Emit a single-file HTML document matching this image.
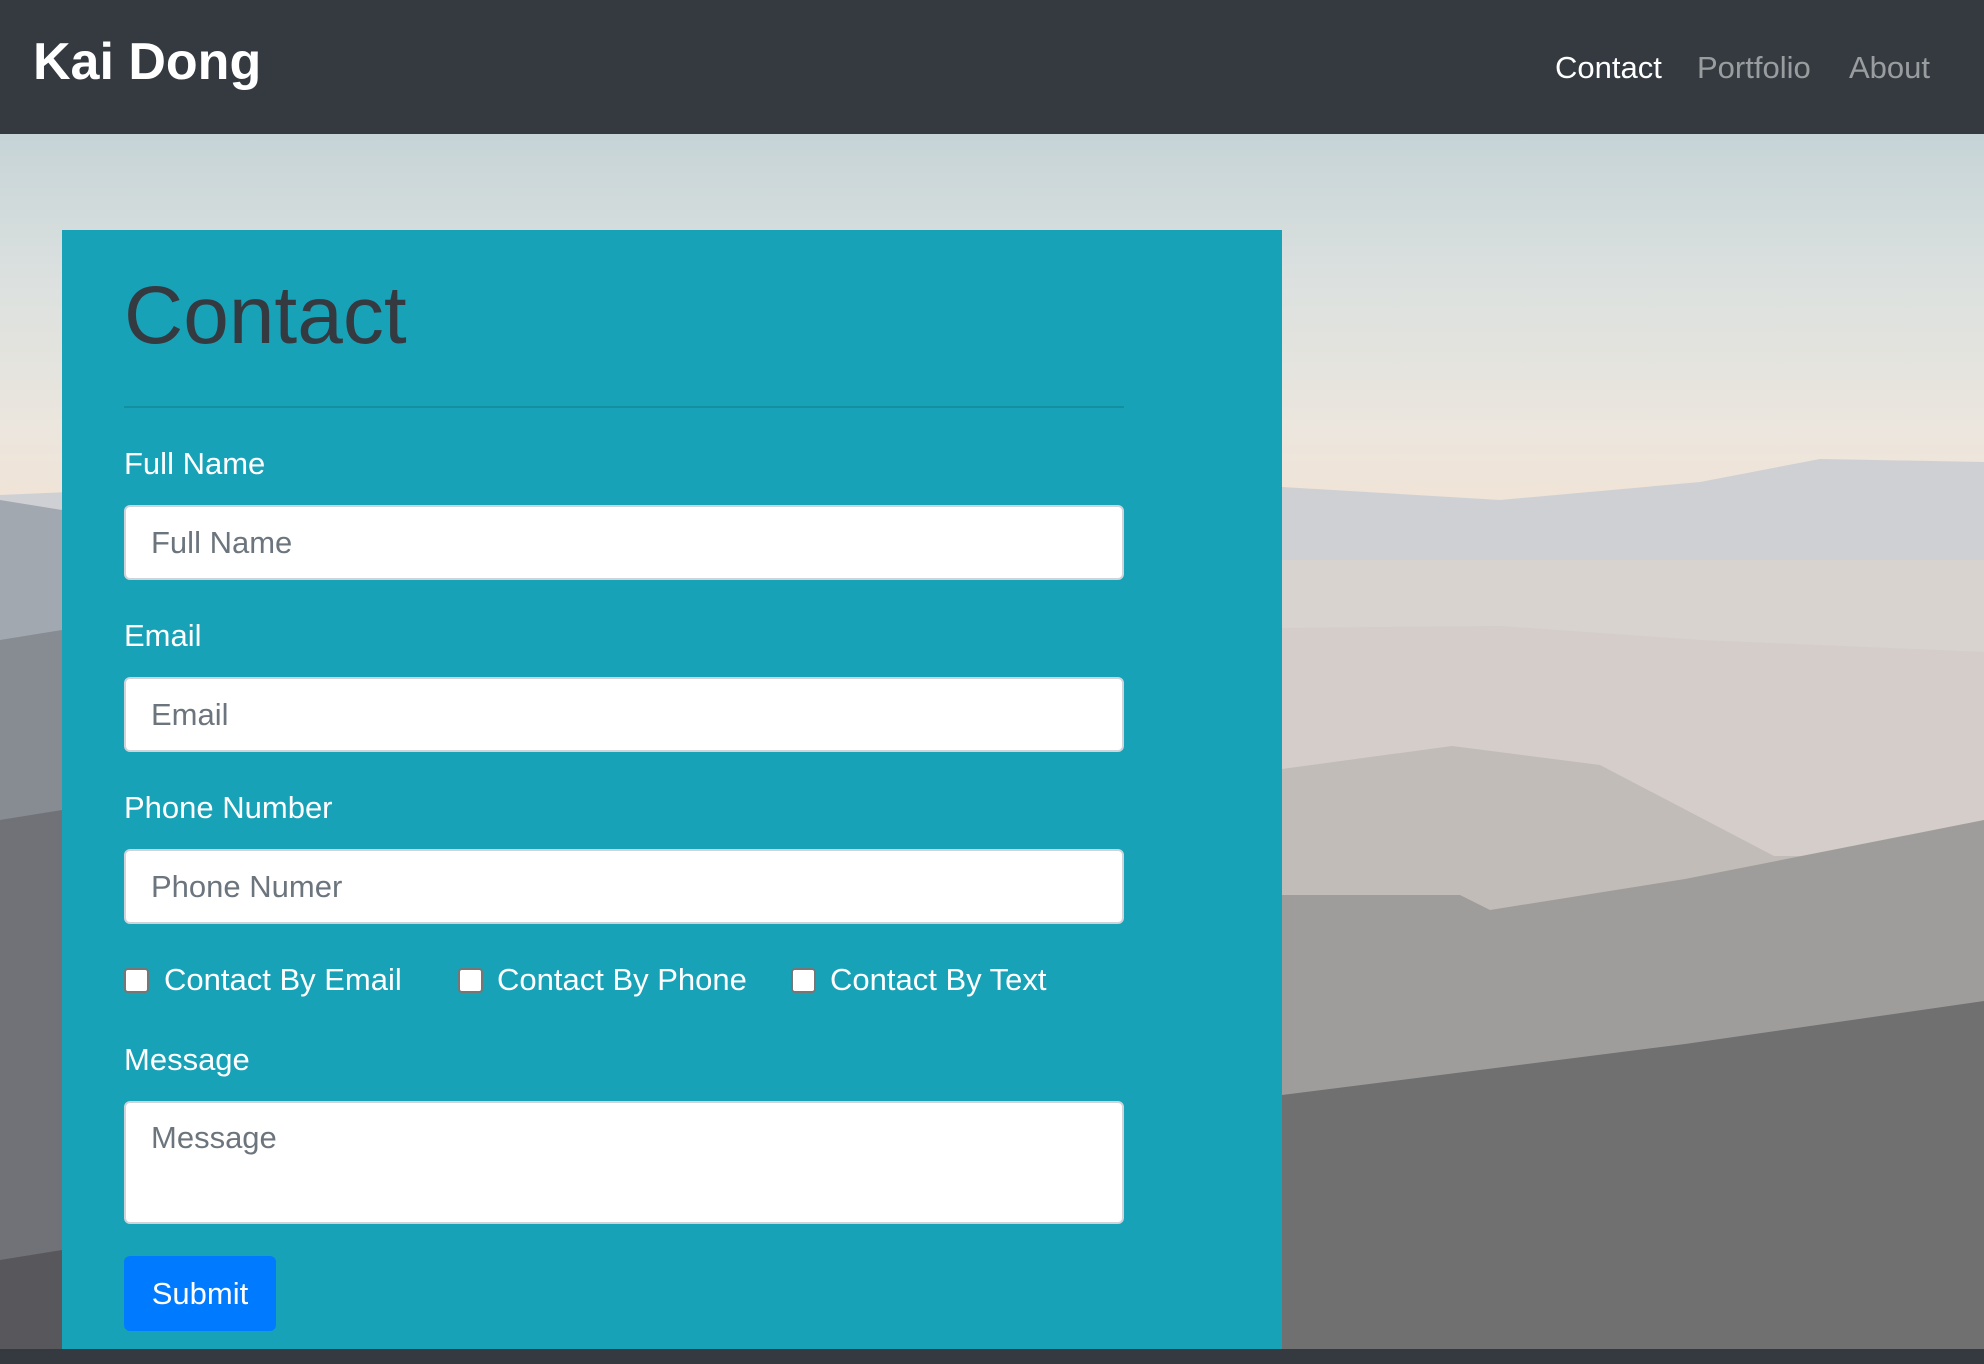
<!DOCTYPE html>
<html><head><meta charset="utf-8">
<style>
*{box-sizing:border-box;margin:0;padding:0}
html,body{width:1984px;height:1364px;overflow:hidden;font-family:"Liberation Sans",sans-serif;background:#343a40}
.nav{position:absolute;left:0;top:0;width:1984px;height:134px;background:#343a40}
.brand{position:absolute;left:33px;top:30px;font-size:52px;font-weight:bold;color:#fff;line-height:64px}
.nl{position:absolute;top:50px;font-size:31px;line-height:36px;color:rgba(255,255,255,.5)}
.bg{position:absolute;left:0;top:134px;width:1984px;height:1215px}
.card{position:absolute;left:62px;top:230px;width:1220px;height:1119px;background:#17a2b8}
h1{position:absolute;left:124px;top:268px;font-size:82px;font-weight:normal;color:#343a40;line-height:96px}
.hr{position:absolute;left:124px;top:406px;width:1000px;height:2px;background:rgba(0,0,0,.12)}
.lbl{position:absolute;left:124px;font-size:31px;color:#fff;line-height:36px}
.in{position:absolute;left:124px;width:1000px;height:75px;background:#fff;border:2px solid #ced4da;border-radius:6px;font-size:31px;color:#6c757d;padding-left:25px;line-height:71px}
.cb{position:absolute;top:968px;width:25px;height:25px;background:#fff;border:2px solid #767676;border-radius:4px}
.ct{position:absolute;top:962px;font-size:31px;color:#fff;line-height:36px}
.btn{position:absolute;left:124px;top:1256px;width:152px;height:75px;background:#007bff;border-radius:6px;color:#fff;font-size:31px;line-height:75px;text-align:center}
.foot{position:absolute;left:0;top:1349px;width:1984px;height:15px;background:#343a40}
</style></head><body>
<div class="nav">
<div class="brand">Kai Dong</div>
<div class="nl" style="left:1555px;color:#fff">Contact</div>
<div class="nl" style="left:1697px">Portfolio</div>
<div class="nl" style="left:1849px">About</div>
</div>
<svg class="bg" width="1984" height="1215" viewBox="0 134 1984 1215">
<defs><linearGradient id="s" x1="0" y1="134" x2="0" y2="560" gradientUnits="userSpaceOnUse">
<stop offset="0" stop-color="#c6d4d7"/><stop offset="0.35" stop-color="#dce1df"/><stop offset="0.7" stop-color="#ece6de"/><stop offset="0.85" stop-color="#f0e3d7"/><stop offset="1" stop-color="#e8e0d8"/></linearGradient></defs>
<rect x="0" y="134" width="1984" height="1215" fill="url(#s)"/>
<path d="M0 495 L400 478 L1282 487 L1500 500 L1700 482 L1820 459 L1984 462 L1984 1349 L0 1349Z" fill="#cfd0d4"/>
<path d="M0 560 L1984 560 L1984 1349 L0 1349Z" fill="#d8d3cf"/>
<path d="M0 635 L1282 628 L1500 626 L1700 640 L1984 652 L1984 1349 L0 1349Z" fill="#d4cdc9"/>
<path d="M0 700 L1282 769 L1452 746 L1600 765 L1774 856 L1984 856 L1984 1349 L0 1349Z" fill="#c1bcb7"/>
<path d="M0 850 L1282 895 L1460 895 L1490 910 L1685 879 L1984 820 L1984 1349 L0 1349Z" fill="#9f9d9c"/>
<path d="M0 1000 L1282 1095 L1685 1044 L1984 1001 L1984 1349 L0 1349Z" fill="#707071"/>
<path d="M0 500 L62 510 L62 1349 L0 1349Z" fill="#a2a8b0"/>
<path d="M0 640 L62 630 L62 1349 L0 1349Z" fill="#878b92"/>
<path d="M0 820 L62 810 L62 1349 L0 1349Z" fill="#707278"/>
<path d="M0 1260 L62 1250 L62 1349 L0 1349Z" fill="#57575c"/>
</svg>
<div class="card"></div>
<h1>Contact</h1>
<div class="hr"></div>
<div class="lbl" style="top:446px">Full Name</div>
<div class="in" style="top:505px">Full Name</div>
<div class="lbl" style="top:618px">Email</div>
<div class="in" style="top:677px">Email</div>
<div class="lbl" style="top:790px">Phone Number</div>
<div class="in" style="top:849px">Phone Numer</div>
<div class="cb" style="left:124px"></div><div class="ct" style="left:164px">Contact By Email</div>
<div class="cb" style="left:458px"></div><div class="ct" style="left:497px">Contact By Phone</div>
<div class="cb" style="left:791px"></div><div class="ct" style="left:830px">Contact By Text</div>
<div class="lbl" style="top:1042px">Message</div>
<div class="in" style="top:1101px;height:123px;line-height:70px">Message</div>
<div class="btn">Submit</div>
<div class="foot"></div>
</body></html>
